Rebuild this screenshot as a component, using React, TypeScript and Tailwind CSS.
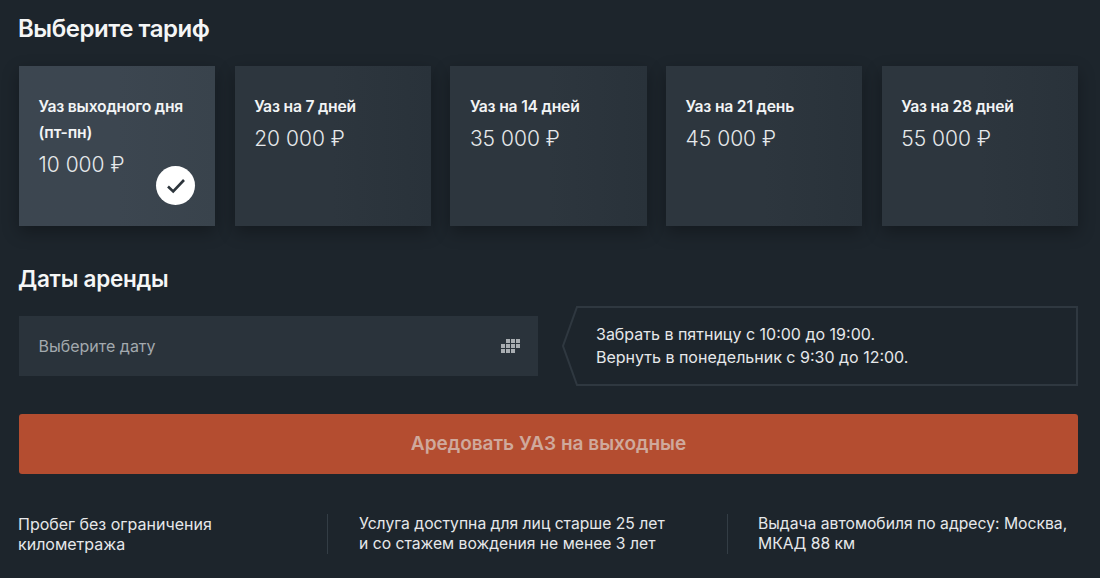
const tariffs = [
  { name: 'Уаз выходного дня (пт-пн)', price: '10 000 ₽', active: true },
  { name: 'Уаз на 7 дней', price: '20 000 ₽' },
  { name: 'Уаз на 14 дней', price: '35 000 ₽' },
  { name: 'Уаз на 21 день', price: '45 000 ₽' },
  { name: 'Уаз на 28 дней', price: '55 000 ₽' },
]

function TariffCard({ name, price, active }: { name: string; price: string; active?: boolean }) {
  return (
    <div
      className={
        'relative h-40 pt-[28px] pl-[19.5px] pr-5 shadow-[0_6px_16px_rgba(0,0,0,0.3)] ' +
        (active
          ? 'bg-gradient-to-r from-[#3c4650] via-[#3c4650] to-[#39434c]'
          : 'bg-gradient-to-r from-[#2d363e] via-[#2d363e] to-[#29323a]')
      }
    >
      <div className="text-[15.7px] leading-[26px] font-semibold text-[#f2f4f5] tracking-[-0.2px]">{name}</div>
      <div className="mt-[6px] text-[21px] leading-[26px] font-light text-[#e6e9eb]">{price}</div>
      {active && (
        <div className="absolute right-5 bottom-[21px] w-[39px] h-[39px] rounded-full bg-white flex items-center justify-center">
          <svg width="20" height="16" viewBox="0 0 20 16" fill="none">
            <path d="M2 8.5L7.2 13.5L18 2" stroke="#2d353c" strokeWidth="2.6" />
          </svg>
        </div>
      )}
    </div>
  )
}

function CalendarDots() {
  const rows = [
    [0, 1, 1, 1],
    [1, 1, 1, 1],
    [1, 1, 1, 0],
  ]
  return (
    <div className="flex flex-col gap-px">
      {rows.map((row, i) => (
        <div key={i} className="flex gap-px">
          {row.map((on, j) => (
            <span key={j} className={'w-1 h-1 ' + (on ? 'bg-[#a9aeb2]' : 'bg-transparent')} />
          ))}
        </div>
      ))}
    </div>
  )
}

export default function App() {
  return (
    <div className="w-[1100px] h-[578px] overflow-hidden bg-[#1d252c] pl-[19px] pr-[22px] font-['Inter',sans-serif] text-white">
      <h2 className="-ml-px pt-[15px] text-[24px] leading-[28px] font-semibold text-[#f5f6f6] tracking-[-0.45px]">Выберите тариф</h2>

      <div className="mt-[23px] grid grid-cols-5 gap-[19.5px]">
        {tariffs.map((t) => (
          <TariffCard key={t.name} {...t} />
        ))}
      </div>

      <h2 className="-ml-px mt-[39px] text-[22.5px] leading-[28px] font-semibold text-[#f5f6f6] tracking-[-0.25px]">Даты аренды</h2>

      <div className="mt-[13px] flex items-center">
        {/* Date input */}
        <div className="w-[519px] h-[60px] bg-[#2a333b] flex items-center justify-between pl-[19.5px] pr-[18px]">
          <span className="-mt-px text-[16px] text-[#a3a9ae]">Выберите дату</span>
          <CalendarDots />
        </div>

        {/* Pick-up hint */}
        <div className="relative ml-6 w-[516px] h-20 pl-[34px] flex flex-col justify-center text-[16px] leading-[23px] text-[#e6e8ea]">
          <svg className="absolute inset-0" width="516" height="80" viewBox="0 0 516 80" fill="none">
            <path d="M15 1H515V79H15L1 40Z" stroke="#2f3840" strokeWidth="2" />
          </svg>
          <div className="relative">Забрать в пятницу с 10:00 до 19:00.</div>
          <div className="relative">Вернуть в понедельник с 9:30 до 12:00.</div>
        </div>
      </div>

      <button className="mt-[28px] w-full h-[60px] rounded-[3px] bg-[#b44d30] text-[19px] font-semibold text-[#cfa99c]">
        Аредовать УАЗ на выходные
      </button>

      {/* Conditions */}
      <div className="-ml-px mt-[40px] flex text-[15.7px] leading-[20px] text-[#e6e8ea]">
        <div className="w-[310px] h-10 text-[16px] border-r border-[#333d45]">
          Пробег без ограничения
          <br />
          километража
        </div>
        <div className="w-[400px] h-10 pl-[31px] border-r border-[#333d45]">
          Услуга доступна для лиц старше 25 лет
          <br />
          и со стажем вождения не менее 3 лет
        </div>
        <div className="pl-[30px]">
          Выдача автомобиля по адресу: Москва,
          <br />
          МКАД 88 км
        </div>
      </div>
    </div>
  )
}
